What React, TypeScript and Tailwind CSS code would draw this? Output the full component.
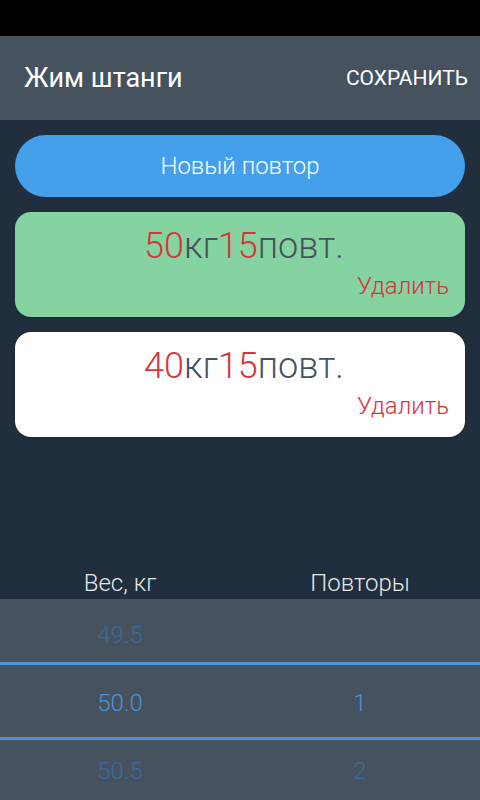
import React from "react";

function SetCard({ weight, reps, bg }: { weight: string; reps: string; bg: string }) {
  return (
    <div className={`${bg} h-[105px] rounded-[16px] flex flex-col pt-[14px] pr-[16px] shadow-sm`}>
      <div className="text-center text-[36px] leading-[40px] font-light text-[#46535f] pl-[24px]">
        <span className="text-[#d8343c]">{weight}</span>кг<span className="text-[#d8343c]">{reps}</span>повт.
      </div>
      <div className="text-right text-[24px] leading-[28px] mt-[6px] font-light text-[#d8343c]">Удалить</div>
    </div>
  );
}

export default function App() {
  return (
    <div
      className="w-[480px] h-[800px] flex flex-col bg-[#212e3d] overflow-hidden"
      style={{ fontFamily: "Roboto, 'Noto Sans', sans-serif" }}
    >
      <div className="h-[36px] bg-black shrink-0" />
      <div className="h-[84px] shrink-0 bg-[#46535f] flex items-center justify-between pl-[24px] pr-[12px]">
        <div className="text-white text-[27px] leading-none">Жим штанги</div>
        <div className="text-white text-[21px] leading-none">СОХРАНИТЬ</div>
      </div>
      <div className="flex flex-col gap-[15px] px-[15px] pt-[15px]">
        <div className="h-[62px] rounded-full bg-[#45a0ec] flex items-center justify-center text-white text-[24px] font-light">
          Новый повтор
        </div>
        <SetCard weight="50" reps="15" bg="bg-[#84d3a0]" />
        <SetCard weight="40" reps="15" bg="bg-white" />
      </div>
      <div className="flex-1" />
      <div className="h-[32px] grid grid-cols-2 items-center text-center text-[24px] font-light leading-none text-[#e6e8ea] shrink-0">
        <div>Вес, кг</div>
        <div>Повторы</div>
      </div>
      <div className="relative h-[201px] shrink-0 bg-[#46535f] pt-[2px] overflow-hidden">
        <div className="grid grid-cols-2 text-center text-[24px] font-light">
          <div className="h-[68px] flex items-center justify-center text-[#3d6b99]">49.5</div>
          <div className="h-[68px]" />
          <div className="h-[68px] flex items-center justify-center text-[#4a93dc]">50.0</div>
          <div className="h-[68px] flex items-center justify-center text-[#4a93dc]">1</div>
          <div className="h-[68px] flex items-center justify-center text-[#3d6b99]">50.5</div>
          <div className="h-[68px] flex items-center justify-center text-[#3d6b99]">2</div>
        </div>
        <div className="absolute left-0 right-0 top-[63px] h-[3px] bg-[#4a93dc]" />
        <div className="absolute left-0 right-0 top-[138px] h-[3px] bg-[#4a93dc]" />
      </div>
    </div>
  );
}
